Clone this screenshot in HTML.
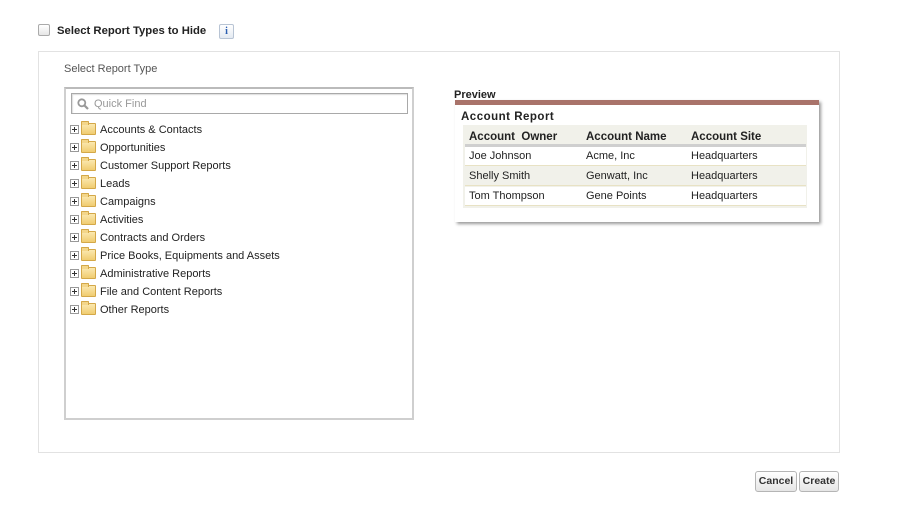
<!DOCTYPE html>
<html><head><style>
*{margin:0;padding:0;box-sizing:border-box}
body{width:914px;height:516px;background:#fff;font-family:"Liberation Sans",Arial,sans-serif;font-size:11px;color:#222;position:relative;overflow:hidden}
.a{position:absolute}
.cb{left:38px;top:24px;width:12px;height:12px;border:1px solid #aaa;border-radius:2px;background:linear-gradient(#fff,#e6e6e6)}
.info{left:219px;top:24px;width:15px;height:15px;border:1px solid #b8c4d4;border-radius:2px;background:linear-gradient(#fff,#e4eaf2);color:#2a5db0;font:bold 10px "Liberation Serif",serif;text-align:center;line-height:13px}
.panel{left:38px;top:51px;width:802px;height:402px;border:1px solid #e2e2e2}
.tree{left:64px;top:87px;width:350px;height:333px;border:2px solid #cfcfcf;border-top-color:#bbb}
.search{left:71px;top:93px;width:337px;height:21px;border:1px solid #a9a9a9;box-shadow:inset 1px 1px 1px #ddd}
.item{left:70px;height:18px;line-height:18px;white-space:nowrap}
.pl{display:inline-block;width:9px;height:9px;border:1px solid #999;position:relative;vertical-align:middle;margin-top:-2px;background:#fff}
.pl:before{content:"";position:absolute;left:1px;top:3px;width:5px;height:1px;background:#333}
.pl:after{content:"";position:absolute;left:3px;top:1px;width:1px;height:5px;background:#333}
.fd{display:inline-block;width:15px;height:12px;vertical-align:middle;margin:-2px 4px 0 2px;background:linear-gradient(#fbe8b0,#f0cc70);border:1px solid #d4a848;border-radius:1px;position:relative}
.fd:before{content:"";position:absolute;left:-1px;top:-3px;width:6px;height:3px;background:#f3d68a;border:1px solid #d4a848;border-bottom:none;border-radius:1px 1px 0 0}
.card{left:455px;top:100px;width:364px;height:122px;background:#fff;border-top:5px solid #a9736a;box-shadow:2px 2px 3px #999}
.tbl{left:463px;top:125px;width:344px;height:83px;background:#f1f1ea}
.row{left:465px;width:341px;height:19px;background:#fff;line-height:19px;border-bottom:1px solid #e8e2c4}
.row span,.hd span{position:absolute}
.hd{left:465px;top:128px;width:341px;height:18px;border-bottom:3px solid #cfcfcf;font-weight:bold;font-size:11.5px;line-height:16px}
.btn{top:471px;height:21px;border:1px solid #b5b5b5;border-radius:3px;background:linear-gradient(#fff,#e6e6e6);font-weight:bold;font-size:10.5px;color:#333;text-align:center;line-height:19px}
</style></head><body>
<div class="a cb"></div>
<div class="a" style="left:57px;top:24px;font-weight:bold;font-size:11.3px;line-height:15px">Select Report Types to Hide</div>
<div class="a info">i</div>
<div class="a panel"></div>
<div class="a" style="left:64px;top:62px;color:#555;line-height:14px;font-size:11px">Select Report Type</div>
<div class="a tree"></div>
<div class="a search"><svg class="a" style="left:5px;top:4px" width="12" height="12" viewBox="0 0 12 12"><circle cx="4.8" cy="4.8" r="3.5" fill="none" stroke="#999" stroke-width="1.8"/><path d="M7.3 7.3L11 11" stroke="#999" stroke-width="2.2"/></svg><span class="a" style="left:22px;top:3px;color:#999;line-height:14px">Quick Find</span></div>
<div class="a item" style="top:121px"><span class="pl"></span><span class="fd"></span>Accounts &amp; Contacts</div>
<div class="a item" style="top:139px"><span class="pl"></span><span class="fd"></span>Opportunities</div>
<div class="a item" style="top:157px"><span class="pl"></span><span class="fd"></span>Customer Support Reports</div>
<div class="a item" style="top:175px"><span class="pl"></span><span class="fd"></span>Leads</div>
<div class="a item" style="top:193px"><span class="pl"></span><span class="fd"></span>Campaigns</div>
<div class="a item" style="top:211px"><span class="pl"></span><span class="fd"></span>Activities</div>
<div class="a item" style="top:229px"><span class="pl"></span><span class="fd"></span>Contracts and Orders</div>
<div class="a item" style="top:247px"><span class="pl"></span><span class="fd"></span>Price Books, Equipments and Assets</div>
<div class="a item" style="top:265px"><span class="pl"></span><span class="fd"></span>Administrative Reports</div>
<div class="a item" style="top:283px"><span class="pl"></span><span class="fd"></span>File and Content Reports</div>
<div class="a item" style="top:301px"><span class="pl"></span><span class="fd"></span>Other Reports</div>
<div class="a" style="left:454px;top:89px;font-weight:bold;font-size:11px;color:#222">Preview</div>
<div class="a card"></div>
<div class="a" style="left:461px;top:111px;font-weight:bold;font-size:11.5px;letter-spacing:0.5px">Account Report</div>
<div class="a tbl"></div>
<div class="a hd" style="top:129px"><span style="left:4px">Account&nbsp; Owner</span><span style="left:121px">Account Name</span><span style="left:226px">Account Site</span></div>
<div class="a row" style="top:147px;font-size:11px"><span style="left:4px">Joe Johnson</span><span style="left:121px">Acme, Inc</span><span style="left:226px">Headquarters</span></div>
<div class="a row" style="top:167px;font-size:11px;background:#f1f1ea"><span style="left:4px">Shelly Smith</span><span style="left:121px">Genwatt, Inc</span><span style="left:226px">Headquarters</span></div>
<div class="a row" style="top:187px;font-size:11px"><span style="left:4px">Tom Thompson</span><span style="left:121px">Gene Points</span><span style="left:226px">Headquarters</span></div>
<div class="a btn" style="left:755px;width:42px">Cancel</div>
<div class="a btn" style="left:799px;width:40px">Create</div>
</body></html>
